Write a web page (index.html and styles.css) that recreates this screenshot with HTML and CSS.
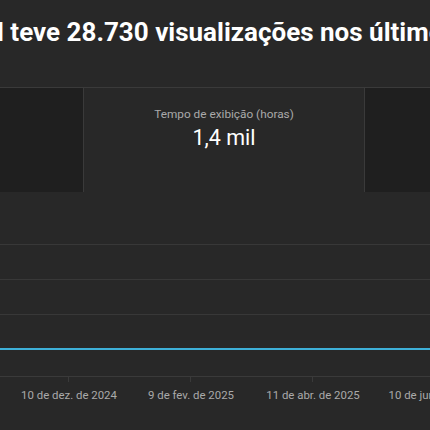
FILE: index.html
```html
<!DOCTYPE html>
<html lang="pt-BR">
<head>
  <meta charset="UTF-8" />
  <title>Visão geral do canal</title>
  <link rel="stylesheet" href="styles.css">
</head>
<body>

  <header class="head">
    <h1 class="head-title"><span class="head-lead">Seu cana</span>l teve 28.730 visualizações nos últimos 28 dias</h1>
  </header>

  <div class="tabs">
    <div class="tab tab-dim">
      <div class="tab-label">Visualizações</div>
      <div class="tab-value">28,7 mil</div>
    </div>
    <div class="tab tab-on">
      <div class="tab-label">Tempo de exibição (horas)</div>
      <div class="tab-value">1,4 mil</div>
    </div>
    <div class="tab tab-dim">
      <div class="tab-label">Inscritos</div>
      <div class="tab-value">+120</div>
    </div>
  </div>

  <div class="chart">
    <div class="grid-row"></div>
    <div class="grid-row"></div>
    <div class="grid-row"></div>
    <div class="grid-row series"></div>
  </div>

  <div class="axis">
    <div class="tick">10 de dez. de 2024</div>
    <div class="tick">9 de fev. de 2025</div>
    <div class="tick">11 de abr. de 2025</div>
    <div class="tick">10 de jun. de 2025</div>
  </div>

</body>
</html>
```

FILE: styles.css
```css
body {
  font-family: Roboto, 'Noto Sans', sans-serif;
  background: #282828;
  color: #f1f1f1;
  margin: 0;
  overflow: hidden;
}
.head {
  height: 87px;
  overflow: hidden;
}
.head-title {
  margin: 0 0 0 -110px;
  padding-top: 17px;
  font-size: 26px;
  font-weight: 700;
  line-height: 30px;
  white-space: nowrap;
  color: #fff;
}
.tabs {
  display: flex;
  height: 104px;
  border-top: 1px solid #3a3a3a;
  margin-left: -196px;
}
.tab {
  width: 281px;
  flex: none;
  text-align: center;
  padding-top: 19px;
  box-sizing: border-box;
  border-right: 1px solid #3a3a3a;
}
.tab:first-child {
  width: 280px;
}
.tab-dim {
  background: #1f1f1f;
}
.tab-dim .tab-label,
.tab-dim .tab-value {
  visibility: hidden;
}
.tab-on {
  background: #282828;
}
.tab-label {
  font-size: 11.8px;
  color: #aaa;
  line-height: 14px;
}
.tab-value {
  font-size: 21.5px;
  color: #fff;
  line-height: 25px;
  margin-top: 4px;
}
.chart {
  margin-top: 18px;
}
.grid-row {
  height: 35px;
  border-bottom: 1px solid #383838;
  box-sizing: border-box;
}
.grid-row.series {
  border-bottom: 2px solid #3eb0d8;
}
.axis {
  display: flex;
  margin-top: 26px;
  padding-left: 8px;
  border-top: 1px solid #3a3a3a;
}
.tick {
  width: 122px;
  flex: none;
  position: relative;
  text-align: center;
  font-size: 11.4px;
  color: #aaa;
  padding-top: 11px;
  white-space: nowrap;
}
.tick::before {
  content: '';
  position: absolute;
  top: 0;
  left: 60px;
  width: 1px;
  height: 5px;
  background: #3a3a3a;
}
```
